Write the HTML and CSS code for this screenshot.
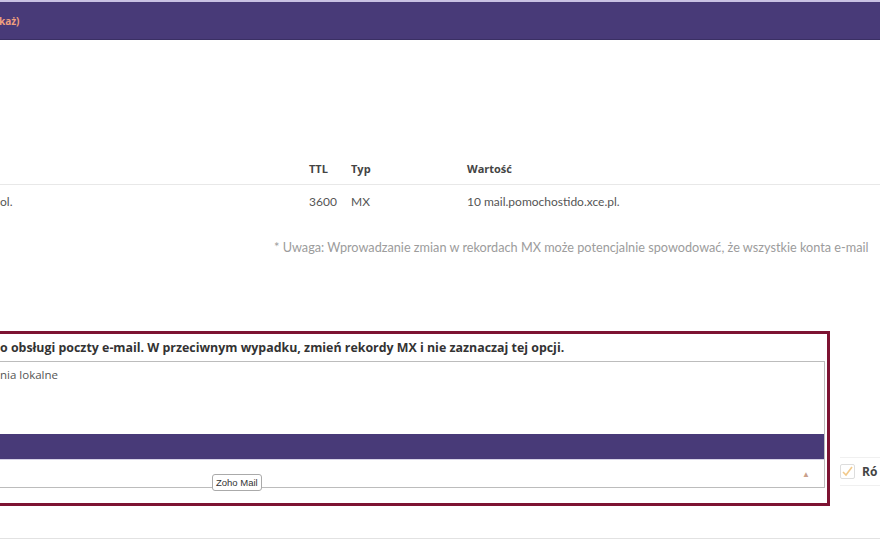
FILE: index.html
```html
<!DOCTYPE html>
<html lang="pl">
<head>
    <meta charset="UTF-8">
    <title>Rekordy MX</title>
    <link rel="stylesheet" href="styles.css">
</head>
<body>
    <div class="topbar">
        <span class="toggle">każ)</span>
    </div>

    <div class="dns">
        <div class="dns-row dns-head">
            <span class="cell name"></span>
            <span class="cell">TTL</span>
            <span class="cell">Typ</span>
            <span class="cell">Wartość</span>
        </div>
        <div class="dns-row">
            <span class="cell name">ol.</span>
            <span class="cell">3600</span>
            <span class="cell">MX</span>
            <span class="cell">10 mail.pomochostido.xce.pl.</span>
        </div>
        <p class="note">* Uwaga: Wprowadzanie zmian w rekordach MX może potencjalnie spowodować, że wszystkie konta e-mail</p>
    </div>

    <div class="mail-row">
        <div class="warn-box">
            <p class="warn-text">o obsługi poczty e-mail. W przeciwnym wypadku, zmień rekordy MX i nie zaznaczaj tej opcji.</p>
            <div class="picker">
                <ul class="options">
                    <li>nia lokalne</li>
                    <li></li>
                    <li></li>
                    <li class="active"></li>
                </ul>
                <div class="select">
                    <span class="arrow">&#9650;</span>
                    <span class="tip">Zoho Mail</span>
                </div>
            </div>
        </div>
        <div class="side">
            <label class="check">
                <span class="box">
                    <svg width="13" height="13" viewBox="0 0 13 13"><path d="M2 7 L5 10 L11 2" fill="none" stroke="#f2c98a" stroke-width="1.6"/></svg>
                </span>
                <span class="check-label">Ró</span>
            </label>
        </div>
    </div>

    <div class="footer-line"></div>
</body>
</html>
```

FILE: styles.css
```css
body {
    margin: 0;
    width: 880px;
    height: 540px;
    overflow: hidden;
    background-color: white;
    font-family: "Open Sans", Arial, sans-serif;
    color: #444;
}

.topbar {
    height: 37px;
    background-color: #483a78;
    border-top: 2px solid #c9c1e3;
    border-bottom: 1px solid #3a2f63;
    display: flex;
    align-items: center;
}

.toggle {
    font-size: 10px;
    font-weight: bold;
    color: #f0a07e;
    margin-left: -1px;
}

.dns {
    padding-top: 112px;
}

.dns-row {
    display: grid;
    grid-template-columns: 309px 42px 116px 1fr;
    height: 32px;
    align-items: center;
    font-family: Lato, "Open Sans", sans-serif;
    font-size: 12px;
    color: #555;
}

.dns-head {
    font-family: "Open Sans", Arial, sans-serif;
    font-size: 11px;
    font-weight: bold;
    color: #444;
    border-bottom: 1px solid #e8e8e8;
}

.note {
    margin: 22px 0 0 274px;
    white-space: nowrap;
    font-family: Lato, "Open Sans", sans-serif;
    font-size: 12.7px;
    color: #9c9c9c;
}

.mail-row {
    margin-top: 76px;
    display: flex;
    align-items: flex-start;
}

.warn-box {
    flex-shrink: 0;
    width: 840px;
    margin-left: -10px;
    border: 3px solid #7d1332;
    border-left: none;
    padding: 0 2px 15px 0;
    box-sizing: border-box;
}

.warn-text {
    margin: 5px 0 5px 10px;
    font-size: 12.4px;
    font-weight: bold;
    color: #333;
    white-space: nowrap;
}

.picker {
    border: 1px solid #bcbcbc;
    border-left: none;
}

.options {
    list-style: none;
    margin: 0;
    padding: 0;
}

.options li {
    height: 24px;
    line-height: 26px;
    padding-left: 10px;
    font-size: 11.5px;
    color: #555;
}

.options li.active {
    height: 25px;
    background-color: #483a78;
}

.select {
    position: relative;
    height: 27px;
    border-top: 1px solid #d6d2e6;
    display: flex;
    align-items: center;
    justify-content: flex-end;
}

.arrow {
    font-size: 8px;
    color: #c9a08a;
    margin-right: 14px;
}

.tip {
    position: absolute;
    left: 222px;
    top: 14px;
    padding: 2px 3px;
    font-family: "Liberation Sans", Arial, sans-serif;
    font-size: 9.5px;
    color: #333;
    background-color: white;
    border: 1px solid #aaa;
    border-radius: 3px;
}

.side {
    margin-top: 126px;
    margin-left: 10px;
    flex: 1;
    height: 27px;
    border-top: 1px solid #f0f0f0;
    border-bottom: 1px solid #f0f0f0;
    display: flex;
    align-items: center;
}

.check {
    display: flex;
    align-items: center;
    gap: 7px;
    white-space: nowrap;
}

.box {
    width: 13px;
    height: 13px;
    border: 1px solid #ddd;
    border-radius: 2px;
    display: flex;
}

.check-label {
    font-size: 12px;
    font-weight: bold;
    color: #444;
}

.footer-line {
    margin-top: 32px;
    border-top: 1px solid #e2e2e2;
}
```
